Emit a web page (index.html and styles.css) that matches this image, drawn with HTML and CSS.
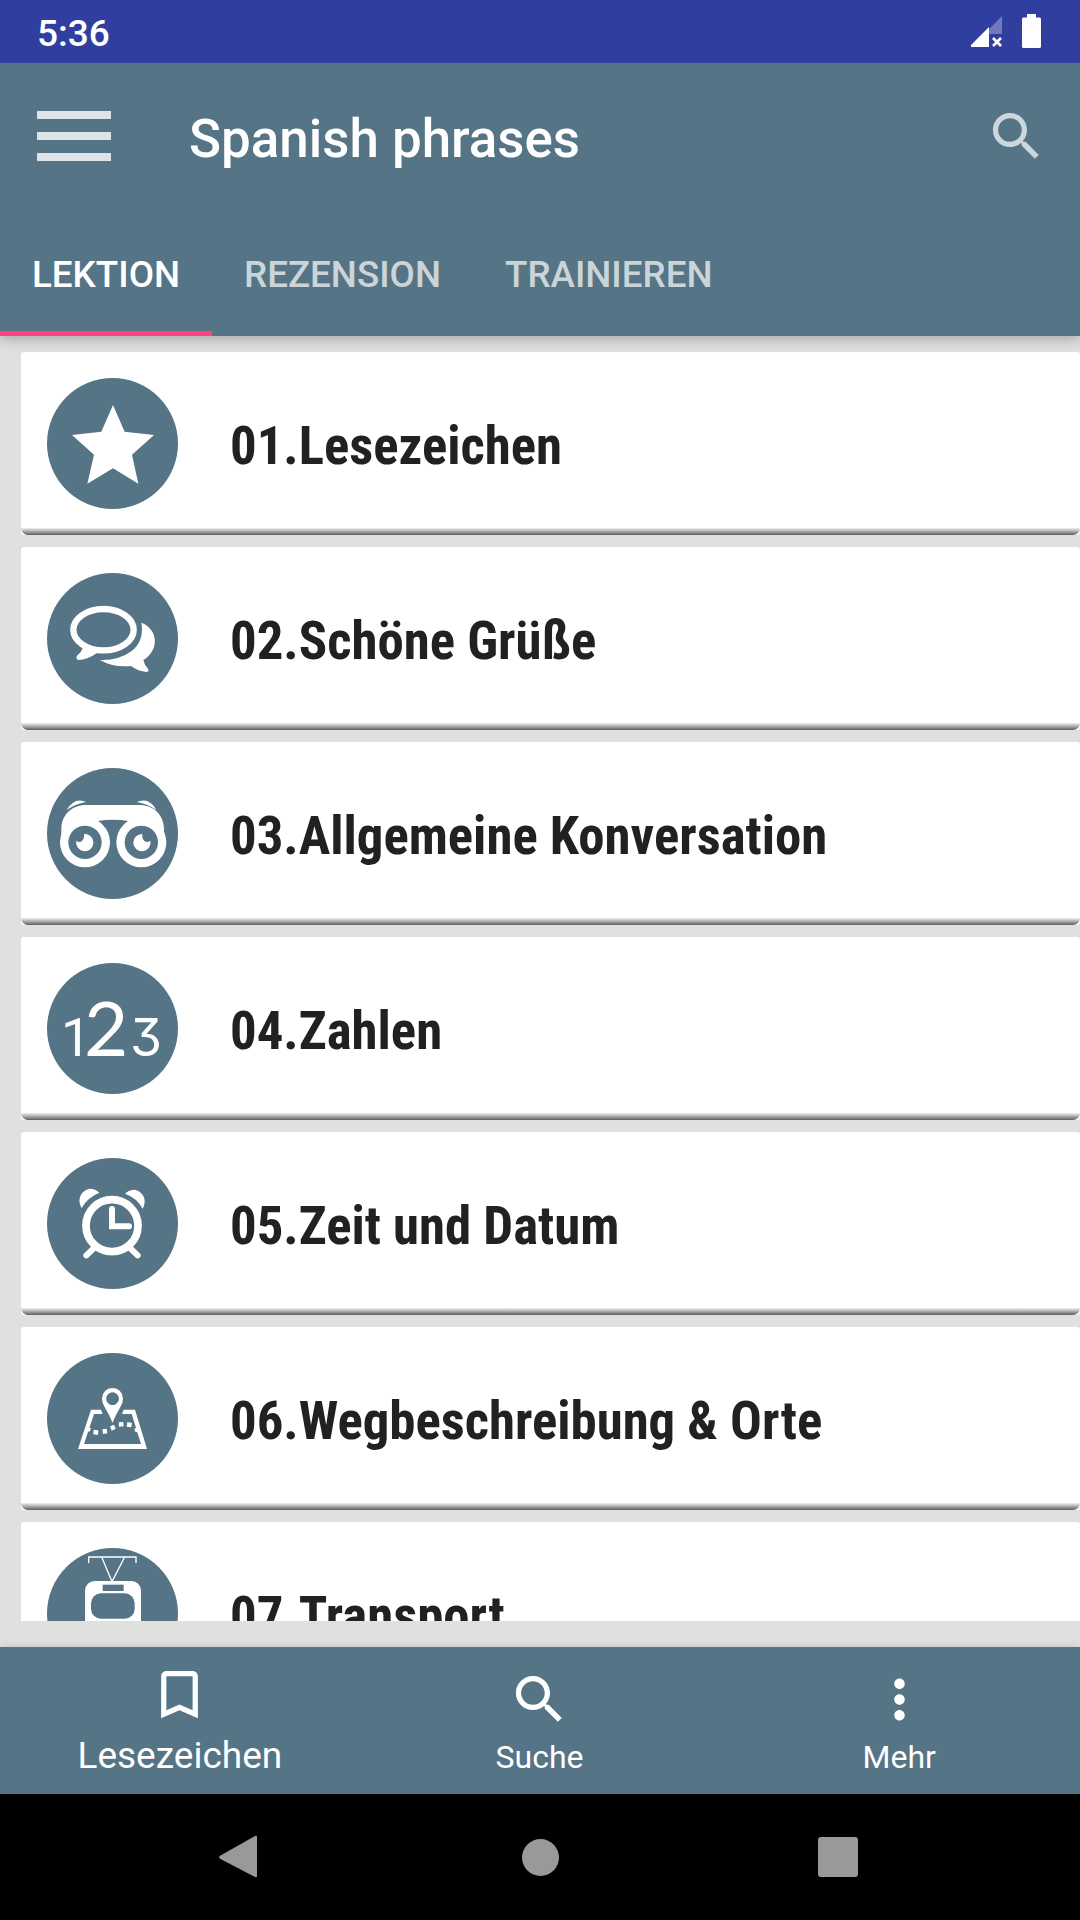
FILE: index.html
```html
<!DOCTYPE html>
<html lang="de">
<head>
    <meta charset="UTF-8">
    <meta name="viewport" content="width=device-width, initial-scale=1.0">
    <title>Spanish phrases</title>
    <link rel="stylesheet" href="styles.css">
</head>
<body>
    <div class="status-bar">
        <span class="clock">5:36</span>
        <svg class="status-icons" viewBox="965 0 80 63">
            <path fill="#7178bb" d="M989 29 L1002 16 V34 H989z"/>
            <path fill="#fff" d="M971 47 V45 L989 27 V47z"/>
            <path stroke="#fff" stroke-width="2.6" d="M993 38 l8 8 M1001 38 l-8 8"/>
            <path fill="#fff" d="M1027 14 h9 v3.5 h3.5 a1.5 1.5 0 0 1 1.5 1.5 v27.5 a1.5 1.5 0 0 1 -1.5 1.5 h-16 a1.5 1.5 0 0 1 -1.5 -1.5 v-27.5 a1.5 1.5 0 0 1 1.5 -1.5 h3.5z"/>
        </svg>
    </div>

    <header class="header">
        <div class="toolbar">
            <div class="menu"><span></span><span></span><span></span></div>
            <h1>Spanish phrases</h1>
            <svg class="icon search" viewBox="0 0 24 24"><path d="M15.5 14h-.79l-.28-.27C15.41 12.59 16 11.11 16 9.5 16 5.91 13.09 3 9.5 3S3 5.91 3 9.5 5.91 16 9.5 16c1.61 0 3.09-.59 4.23-1.57l.27.28v.79l5 4.99L20.49 19l-4.99-5zm-6 0C7.01 14 5 11.99 5 9.5S7.01 5 9.5 5 14 7.01 14 9.5 11.99 14 9.5 14z"/></svg>
        </div>
        <nav class="tabs">
            <a class="tab active">LEKTION</a>
            <a class="tab">REZENSION</a>
            <a class="tab">TRAINIEREN</a>
        </nav>
    </header>

    <main class="list">
        <div class="card">
            <svg class="badge" viewBox="51 39 393 393">
                <circle class="disc" cx="247.5" cy="235.5" r="196.5"/>
                <path class="fill" d="M249 120 L284 200 L372 210 L306 269 L325 356 L249 310 L172 356 L192 269 L126 210 L214 200z"/>
            </svg>
            <span class="name">01.Lesezeichen</span>
        </div>
        <div class="card">
            <svg class="badge" viewBox="51 39 393 393">
                <circle class="disc" cx="247.5" cy="235.5" r="196.5"/>
                <ellipse class="line" cx="220.5" cy="209" rx="90.5" ry="62" stroke-width="19"/>
                <path class="fill" d="M160 255 Q158 274 141 287 Q136 296 145 300 Q173 299 201 279 L183 259z"/>
                <path class="fill" d="M334 188 C385 207 389 271 340 300 Q343 315 355 328 Q357 336 349 336 Q325 334 303 318 Q249 323 210 300 Q266 302 304 274 Q344 242 334 188z"/>
            </svg>
            <span class="name">02.Schöne Grüße</span>
        </div>
        <div class="card">
            <svg class="badge" viewBox="51 39 393 393">
                <circle class="disc" cx="247.5" cy="235.5" r="196.5"/>
                <path class="fill" d="M110 165 Q134 125 168 141 Q135 147 110 165z M379 165 Q358 125 320 141 Q354 147 379 165z"/>
                <path class="fill" d="M94 240 V220 C96 174 130 150 170 150 H328 C368 150 400 176 402 220 V240 L350 300 L284 210 L296 198 Q249 190 203 198 L216 210 L150 300z"/>
                <circle class="fill" cx="165" cy="262" r="75"/>
                <circle class="fill" cx="334" cy="262" r="75"/>
                <circle class="disc" cx="165" cy="262" r="50"/>
                <circle class="disc" cx="334" cy="262" r="50"/>
                <path class="fill" d="M162 237 A26 26 0 1 1 139 257 Q147 264 155 259 Q164 251 162 237z"/>
                <path class="fill" d="M337 237 A26 26 0 1 0 361 257 Q352 264 344 259 Q335 251 337 237z"/>
            </svg>
            <span class="name">03.Allgemeine Konversation</span>
        </div>
        <div class="card">
            <svg class="badge" viewBox="51 39 393 393">
                <circle class="disc" cx="247.5" cy="235.5" r="196.5"/>
                <text class="digit one" x="93" y="317" font-size="159">1</text>
                <text class="digit" x="162" y="317" font-size="229">2</text>
                <text class="digit three" x="300" y="317" font-size="155">3</text>
            </svg>
            <span class="name">04.Zahlen</span>
        </div>
        <div class="card">
            <svg class="badge" viewBox="51 39 393 393">
                <circle class="disc" cx="247.5" cy="235.5" r="196.5"/>
                <circle class="line" cx="246" cy="242" r="78" stroke-width="23"/>
                <path class="line round" stroke-width="18" d="M189 312 L169 331 M303 312 L323 331"/>
                <path class="line" stroke-width="18" d="M246 193 V244 H296"/>
                <circle class="fill" cx="246" cy="192" r="9"/>
                <circle class="fill" cx="297" cy="244" r="9"/>
                <path class="fill" d="M155 189 C137 158 160 131 183 131 Q198 132 208 143 Q174 156 155 189z M338 191 C356 161 332 134 311 134 Q295 135 285 146 Q320 158 338 191z"/>
            </svg>
            <span class="name">05.Zeit und Datum</span>
        </div>
        <div class="card">
            <svg class="badge" viewBox="51 39 393 393">
                <circle class="disc" cx="247.5" cy="235.5" r="196.5"/>
                <path class="fill" fill-rule="evenodd" d="M183 209 H213 L218 222 H192 L162 312 H333 L305 222 H276 L281 209 H315 L351 327 H144z"/>
                <path class="fill" fill-rule="evenodd" d="M247.5 248 Q237 222 225 203 Q216 190 216 176 A31.5 32 0 0 1 279 176 Q279 190 270 203 Q257 224 247.5 248z M247.5 157 a19 19 0 1 0 .1 0z"/>
                <path class="fill" d="M191 269 l14 2 l-1 14 l-14 -2z M217 268 l13 -2 l2 14 l-13 2z M240 259 l12 -5 l5 12 l-12 6z M266 247 l14 -1 l1 13 l-14 1z M292 246 l14 3 l-2 13 l-14 -2z M172 261 l11 4 l-4 10 l-11 -2z M314 264 l10 4 l3 11 l-13 -5z"/>
            </svg>
            <span class="name">06.Wegbeschreibung &amp; Orte</span>
        </div>
        <div class="card">
            <svg class="badge" viewBox="51 39 393 393">
                <circle class="disc" cx="247.5" cy="235.5" r="196.5"/>
                <path class="line" stroke-width="4" d="M176 84 V66 H318 V84 M215 66 L246 140 L284 66"/>
                <rect class="fill" x="165" y="138" width="168" height="220" rx="29"/>
                <rect class="disc" x="218" y="149" width="63" height="19"/>
                <rect class="disc" x="183" y="175" width="131" height="76" rx="30"/>
            </svg>
            <span class="name">07.Transport</span>
        </div>
    </main>

    <footer class="bottom-bar">
        <a class="item selected">
            <svg class="icon" viewBox="0 0 24 24"><path d="M17 3H7c-1.1 0-1.99.9-1.99 2L5 21l7-3 7 3V5c0-1.1-.9-2-2-2zm0 15l-5-2.18L7 18V5h10v13z"/></svg>
            <span>Lesezeichen</span>
        </a>
        <a class="item">
            <svg class="icon" viewBox="0 0 24 24"><path d="M15.5 14h-.79l-.28-.27C15.41 12.59 16 11.11 16 9.5 16 5.91 13.09 3 9.5 3S3 5.91 3 9.5 5.91 16 9.5 16c1.61 0 3.09-.59 4.23-1.57l.27.28v.79l5 4.99L20.49 19l-4.99-5zm-6 0C7.01 14 5 11.99 5 9.5S7.01 5 9.5 5 14 7.01 14 9.5 11.99 14 9.5 14z"/></svg>
            <span>Suche</span>
        </a>
        <a class="item">
            <svg class="icon" viewBox="0 0 24 24"><path d="M12 8c1.1 0 2-.9 2-2s-.9-2-2-2-2 .9-2 2 .9 2 2 2zm0 2c-1.1 0-2 .9-2 2s.9 2 2 2 2-.9 2-2-.9-2-2-2zm0 6c-1.1 0-2 .9-2 2s.9 2 2 2 2-.9 2-2-.9-2-2-2z"/></svg>
            <span>Mehr</span>
        </a>
    </footer>

    <div class="nav-bar">
        <svg viewBox="0 0 1080 126">
            <path d="M220.5 61.5 L255 42 Q257 41 257 43 V82 Q257 84 255 83 L220.5 65 Q218 63 220.5 61.5z"/>
            <circle cx="540.5" cy="63.5" r="18.5"/>
            <rect x="818" y="43" width="40" height="40" rx="3"/>
        </svg>
    </div>
</body>
</html>
```
FILE: styles.css
```css
* {
    box-sizing: border-box;
}
body {
    margin: 0;
    width: 1080px;
    height: 1920px;
    display: flex;
    flex-direction: column;
    overflow: hidden;
    background-color: #e0e0e0;
    font-family: Roboto, sans-serif;
    color: #fff;
}
.status-bar {
    position: relative;
    z-index: 1;
    flex: none;
    height: 63px;
    padding: 0 35px 0 37px;
    display: flex;
    align-items: center;
    justify-content: space-between;
    background-color: #303f9f;
}
.clock {
    font-size: 37px;
    font-weight: 500;
    padding-top: 4px;
}
.status-icons {
    width: 80px;
    height: 63px;
}
.header {
    flex: none;
    height: 273px;
    background-color: #557485;
    box-shadow: 0 2px 14px rgba(0, 0, 0, 0.3);
}
.toolbar {
    height: 147px;
    padding: 0 32px 0 37px;
    display: flex;
    align-items: center;
}
.menu {
    width: 74px;
    display: flex;
    flex-direction: column;
    gap: 12.5px;
    margin-bottom: 1px;
}
.menu span {
    height: 8.5px;
    background-color: #dde3e6;
}
h1 {
    flex: 1;
    margin: 4px 0 0 78px;
    font-size: 52.9px;
    font-weight: 500;
    line-height: 62px;
}
.icon {
    width: 63px;
    height: 63px;
    fill: #fff;
}
.search {
    fill: #cdd6da;
}
.tabs {
    height: 126px;
    display: flex;
}
.tab {
    padding: 0 32px;
    font-size: 36.75px;
    font-weight: 500;
    line-height: 130px;
    color: #cbd4d9;
}
.tab.active {
    height: 126px;
    color: #fff;
    border-bottom: 5px solid #ff4081;
}
.list {
    flex: none;
    height: 1285px;
    padding: 16px 0 0 21px;
    display: flex;
    flex-direction: column;
    gap: 12px;
    overflow: hidden;
    position: relative;
    z-index: -1;
}
.card {
    position: relative;
    flex: none;
    height: 183px;
    padding: 0 0 3px 26px;
    display: flex;
    align-items: center;
    background-color: #fff;
    border-radius: 3px;
}
/* bevel on the lower edge */
.card::after {
    content: "";
    position: absolute;
    left: 0;
    right: 0;
    bottom: 0;
    height: 7px;
    border-radius: 0 0 7px 7px;
    background: linear-gradient(#f0f0f0, #b0b0b0 45%, #5c5c5c);
}
.badge {
    width: 131px;
    height: 131px;
    margin-top: 3px;
}
.disc {
    fill: #557485;
}
.fill,
.digit {
    fill: #fff;
}
.line {
    fill: none;
    stroke: #fff;
}
.round {
    stroke-linecap: round;
}
.digit {
    font-family: Lato, sans-serif;
}
.digit.one {
    font-family: Roboto, sans-serif;
}
.digit.three {
    font-family: Inter, sans-serif;
    font-feature-settings: "cv09";
}
.name {
    margin-left: 52px;
    padding-top: 7px;
    font-family: "Roboto Condensed", Roboto, sans-serif;
    font-stretch: 75%;
    font-size: 52.8px;
    font-weight: 700;
    color: #212121;
    white-space: nowrap;
}
.bottom-bar {
    flex: none;
    height: 147px;
    margin-top: 26px;
    padding-right: 1px;
    display: flex;
    background-color: #557485;
    box-shadow: 0 0 8px rgba(0, 0, 0, 0.15);
}
.item {
    flex: 1;
    padding-top: 21px;
    display: flex;
    flex-direction: column;
    align-items: center;
    font-size: 32px;
}
.item span {
    line-height: 40px;
    margin-top: 6px;
}
.item.selected {
    padding-top: 16px;
    font-size: 37px;
}
.item.selected span {
    margin-top: 10px;
}
.nav-bar {
    flex: none;
    height: 126px;
    background-color: #000;
}
.nav-bar svg {
    display: block;
    fill: #999;
}
```
